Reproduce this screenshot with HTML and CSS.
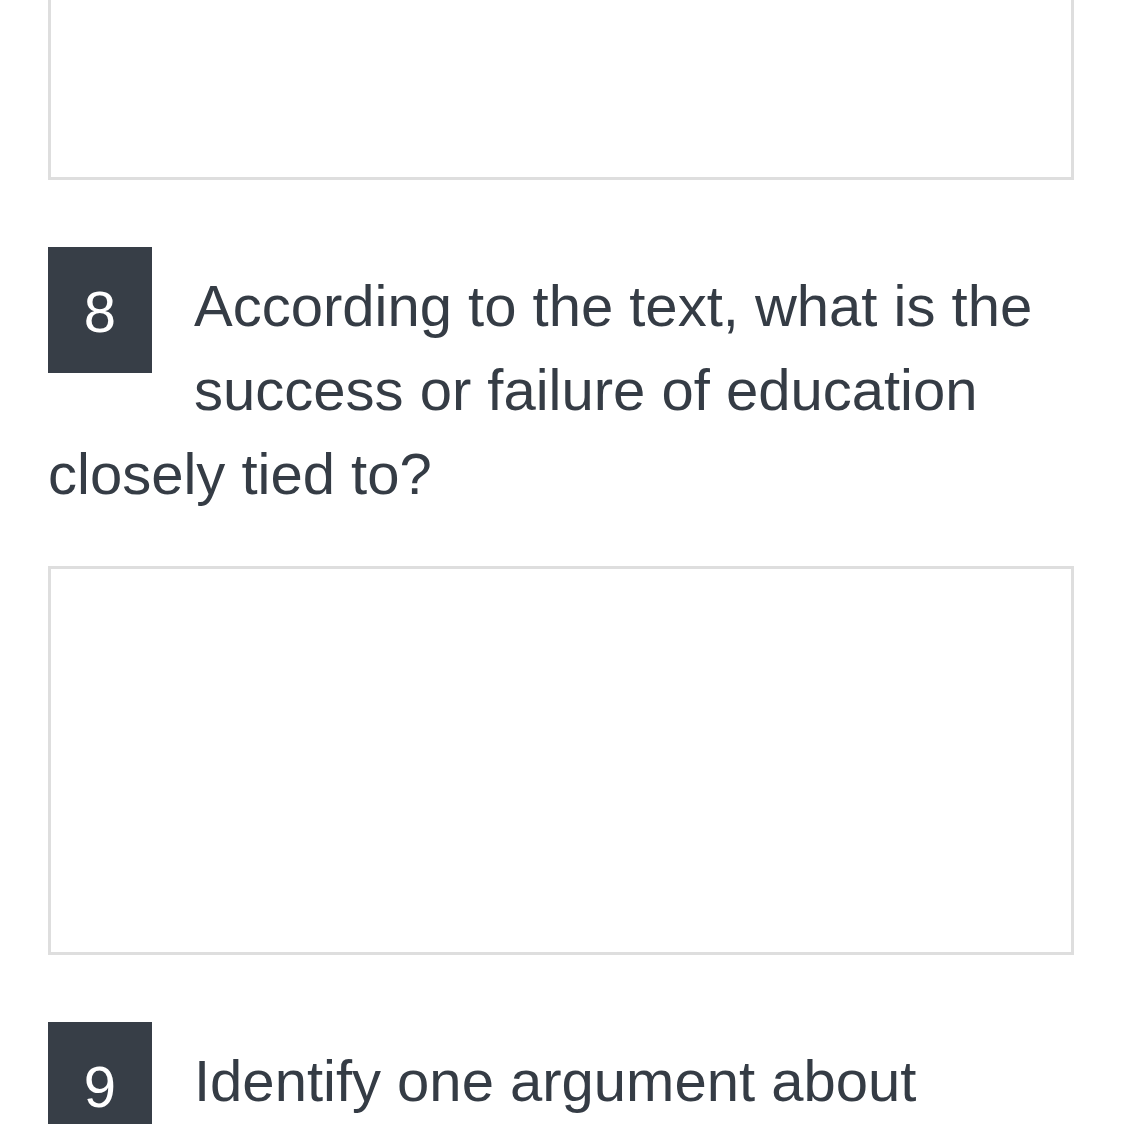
FILE: index.html
```html
<!DOCTYPE html>
<html>
<head>
<meta charset="utf-8">
<link rel="stylesheet" href="styles.css">
</head>
<body>
<div class="page">
  <div class="answer answer-first"></div>
  <div class="question">
    <span class="num">8</span>
    <p class="qtext">According to the text, what is the success or failure of education closely tied to?</p>
  </div>
  <div class="answer"></div>
  <div class="question">
    <span class="num">9</span>
    <p class="qtext">Identify one argument about education that the text presents.</p>
  </div>
</div>
</body>
</html>
```
FILE: styles.css
```css
html, body {
  margin: 0;
  padding: 0;
  background: #ffffff;
  overflow: hidden;
}
.page {
  padding: 0 48px;
  font-family: "Liberation Sans", Arial, sans-serif;
  color: #353c45;
}
.answer {
  box-sizing: border-box;
  height: 389px;
  border: 3px solid #dedede;
  background: #fff;
}
.answer-first {
  margin-top: -209px;
}
.question {
  margin: 67px 0 50px;
}
.question::after {
  content: "";
  display: block;
  clear: both;
}
.num {
  float: left;
  box-sizing: border-box;
  width: 104px;
  height: 126px;
  margin-right: 42px;
  padding-top: 4px;
  background: #373e47;
  color: #fff;
  font-size: 58px;
  line-height: 122px;
  text-align: center;
}
.qtext {
  margin: 0;
  padding-top: 17px;
  font-size: 58px;
  line-height: 84px;
}
```
